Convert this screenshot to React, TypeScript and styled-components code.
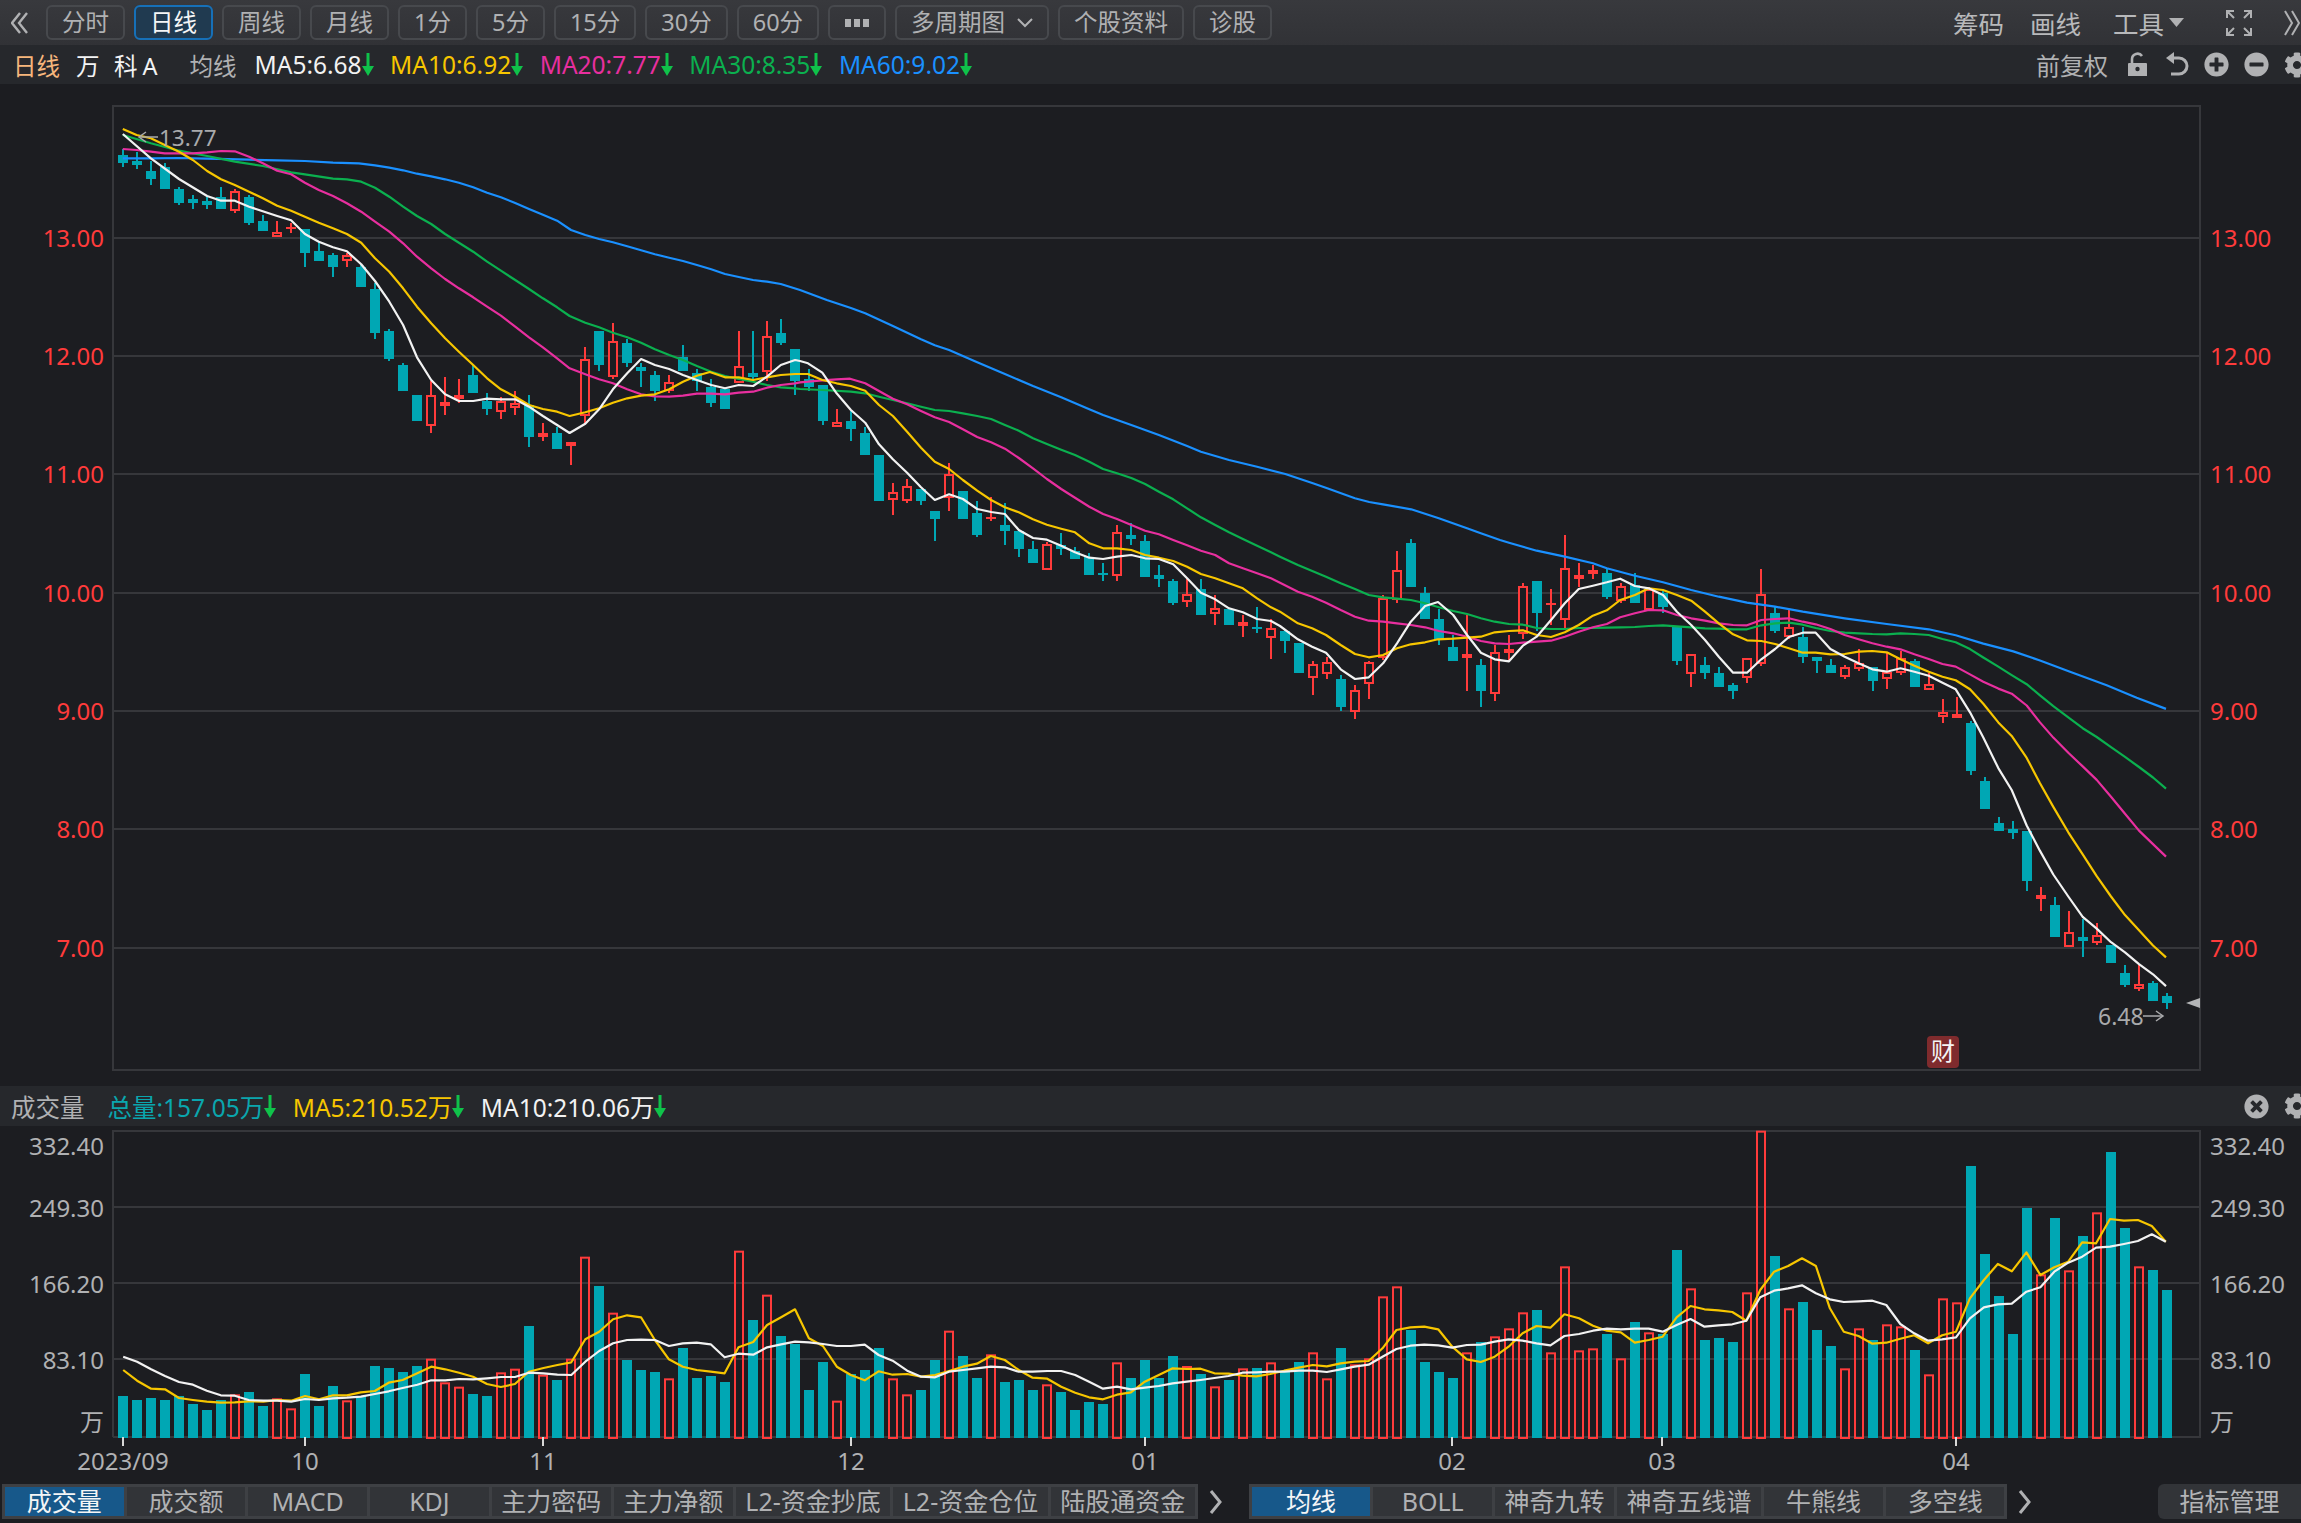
import { FaCog, FaMinusCircle, FaPlusCircle, FaTimesCircle } from 'react-icons/fa';
import styled, { createGlobalStyle } from 'styled-components';

const FONT = '"Noto Sans", "Noto Sans CJK SC", sans-serif';
const UP = '#ff3b3b';
const DOWN = '#00a7b4';
const BG = '#1c1d21';
const GRID = '#36373b';
const MA_COLORS = { ma5: '#f2f2f2', ma10: '#f7c600', ma20: '#e82f9f', ma30: '#0bb04f', ma60: '#1a90ff' };

const GlobalStyle = createGlobalStyle`
  html, body {
    margin: 0;
    background: ${BG};
    overflow: hidden;
  }
  body {
    font-family: ${FONT};
  }
`;

const Page = styled.div`
  display: flex;
  flex-direction: column;
  width: 2301px;
  height: 1523px;
  overflow: hidden;
  background: ${BG};
  font-size: 23.5px;
  color: #b4b5b7;
`;

const TopBar = styled.div`
  display: flex;
  align-items: center;
  flex: none;
  height: 45px;
  padding-left: 11px;
  background: linear-gradient(#38393d, #313236);
`;

const BackIcon = styled.svg`
  flex: none;
  width: 18px;
  height: 22px;
  margin-right: 17px;
`;

const PeriodButton = styled.div<{ $active?: boolean }>`
  display: flex;
  align-items: center;
  justify-content: center;
  gap: 12px;
  flex: none;
  box-sizing: border-box;
  height: 35px;
  margin-right: 9px;
  padding: 0 14px;
  border: 2px solid ${(p) => (p.$active ? '#1670b8' : '#47494d')};
  border-radius: 6px;
  background: ${(p) => (p.$active ? '#203a50' : 'transparent')};
  color: ${(p) => (p.$active ? '#f4f5f6' : '#b0b1b3')};
  line-height: 1;
`;

const ToolGroup = styled.div`
  display: flex;
  align-items: center;
  margin-left: auto;
  margin-right: 1px;
`;

const ToolItem = styled.span<{ $gap: number }>`
  display: flex;
  align-items: center;
  gap: 5px;
  margin-right: ${(p) => p.$gap}px;
  font-size: 25.5px;
  color: #b8b9bb;
`;

const InfoBar = styled.div`
  display: flex;
  align-items: center;
  flex: none;
  height: 39px;
  padding-left: 13px;
  background: #26282c;
  white-space: nowrap;
`;

const VolumeBar = styled(InfoBar)`
  height: 40px;
  padding-left: 11px;
  font-size: 24.5px;
`;

const Label = styled.span<{ $color?: string; $gap?: number; $track?: number }>`
  margin-right: ${(p) => p.$gap ?? 0}px;
  color: ${(p) => p.$color ?? '#b0b1b3'};
  letter-spacing: ${(p) => p.$track ?? 0}px;
`;

const Reading = styled.span<{ $color: string }>`
  display: flex;
  align-items: center;
  margin-right: 16.5px;
  font-size: 24.5px;
  color: ${(p) => p.$color};
`;

const DownArrow = styled.svg`
  flex: none;
  width: 12px;
  height: 23px;
`;

const InfoTools = styled.div`
  display: flex;
  align-items: center;
  gap: 15px;
  margin-left: auto;
  margin-right: -9px;
  color: #b0b1b3;
`;

const AdjustLabel = styled.span`
  margin-right: 3px;
  font-size: 24px;
`;

const ToolIcon = styled.svg`
  flex: none;
  width: 24px;
  height: 25px;
`;

const ChartSvg = styled.svg`
  display: block;
  flex: none;
  width: 2301px;
  font-family: ${FONT};
  font-size: 24px;
`;

const TabRow = styled.div`
  display: flex;
  align-items: center;
  flex: none;
  height: 35px;
  padding-left: 2px;
  font-size: 25px;
`;

const TabGroup = styled.div`
  display: flex;
  height: 35px;
  box-sizing: border-box;
  border: 3px solid #3e4044;
  background: #3e4044;
`;

const Tab = styled.div<{ $active?: boolean }>`
  display: flex;
  align-items: center;
  justify-content: center;
  box-sizing: border-box;
  min-width: 118.7px;
  margin-right: 3px;
  padding: 0 9.5px;
  background: ${(p) => (p.$active ? '#17588a' : '#323438')};
  color: ${(p) => (p.$active ? '#f4f5f6' : '#b0b1b3')};
  line-height: 1;
  white-space: nowrap;
  &:last-child {
    margin-right: 0;
  }
`;

const TabArrow = styled.svg<{ $after: number }>`
  flex: none;
  width: 14px;
  height: 26px;
  margin: 0 ${(p) => p.$after}px 0 11px;
`;

const ManageButton = styled.div`
  display: flex;
  align-items: center;
  justify-content: center;
  width: 143px;
  height: 35px;
  margin-left: auto;
  border-radius: 6px 0 0 6px;
  background: #323438;
  line-height: 1;
`;

type Pt = [number, number];

// pixel readings taken from crops, each with its own origin and scale
const trace = (x0: number, y0: number, sx: number, sy: number, flat: number[]): Pt[] => {
  const out: Pt[] = [];
  for (let i = 0; i < flat.length; i += 2) out.push([x0 + flat[i] / sx, y0 + flat[i + 1] / sy]);
  return out;
};
const a = (p: number[]) => trace(100, 110, 2.24, 3, p);
const b = (p: number[]) => trace(800, 300, 2.24, 3, p);
const c = (p: number[]) => trace(1280, 500, 2.24, 3, p);
const d = (p: number[]) => trace(1750, 550, 3, 2.958, p);
const v1 = (p: number[]) => trace(0, 1060, 1.3635, 3, p);
const v2 = (p: number[]) => trace(1150, 1060, 1.3635, 3, p);

const priceLines: { color: string; pts: Pt[] }[] = [
  {
    color: MA_COLORS.ma60,
    pts: [
      ...a([51,145,114,145,177,144,240,146,334,149,397,151,459,153,522,158,580,160,616,166,648,173,679,181,710,191,742,199,773,208,804,218,836,232,867,248,898,262,930,279,961,297,992,314,1024,332,1055,360,1087,375,1118,387,1149,397,1181,409,1212,421,1243,433,1275,443,1306,453,1337,465,1369,478,1400,492,1431,501,1463,510,1494,515,1525,522,1568,540]),
      ...b([60,0,114,24,146,40,208,78,271,118,302,136,334,150,397,187,459,222,522,258,585,292,648,328,679,345,742,375,804,405,867,438,898,455,961,480,1024,500,1087,522,1149,550,1181,565,1243,595,1275,606,1306,613,1369,628,1431,655,1494,685,1525,700,1568,720]),
      ...c([513,128,575,152,638,170,701,190,732,205,795,227,858,247,921,270,983,290,1046,308,1109,320,1171,335,1265,355,1359,372,1453,388]),
      ...d([617,252,700,277,790,300,870,327,960,360,1070,400,1160,437,1248,470]),
    ],
  },
  {
    color: MA_COLORS.ma30,
    pts: [
      ...a([51,75,114,100,177,122,240,138,302,155,365,168,428,187,459,193,522,206,553,208,585,215,616,233,648,260,679,290,710,318,742,342,773,372,804,398,836,425,867,455,898,482,930,510,961,537,992,565,1024,592,1052,618,1087,638,1118,652,1149,668,1181,682,1212,698,1243,718,1275,735,1306,750,1337,768,1369,785,1400,798,1431,807,1463,815,1494,825,1525,832,1557,835]),
      ...b([0,267,50,270,114,275,146,280,177,290,208,300,240,310,271,320,302,330,334,333,365,340,397,348,428,357,459,375,490,392,522,415,553,432,585,449,616,465,648,485,679,507,710,520,742,534,773,552,804,575,836,598,867,625,898,652,930,675,961,697,992,717,1024,737,1055,757]),
      ...c([0,170,40,195,103,230,136,250,168,267,199,285,231,292,262,296,293,300,325,310,356,322,388,333,419,342,450,355,481,365,513,372,544,374,575,384,607,387,638,387,669,384,701,384,732,383,762,382,795,381,826,378,858,376,889,379,921,382,952,385,983,386,1015,388,1046,388,1078,376,1109,370,1140,368,1171,374,1200,384,1233,393,1265,398,1296,400,1327,402,1359,403,1390,400,1421,402,1453,405,1484,417]),
      ...d([617,273,660,293,700,318,745,345,785,370,830,397,870,430,910,462,955,495,998,527,1040,553,1083,583,1125,612,1167,642,1209,673,1248,706]),
    ],
  },
  {
    color: MA_COLORS.ma20,
    pts: [
      ...a([51,117,82,120,114,125,145,130,177,130,208,130,240,127,271,123,302,124,334,140,365,160,397,182,428,193,459,218,490,240,522,258,553,280,585,305,616,335,648,365,679,400,710,440,742,475,773,507,804,535,836,562,867,590,898,617,930,650,961,682,992,712,1024,745,1052,775,1087,793,1118,808,1149,820,1181,838,1212,853,1243,859,1275,860,1306,857,1337,851,1369,851,1400,853,1431,848,1463,845,1494,833,1525,825,1557,820]),
      ...b([0,247,18,245,50,241,82,238,112,236,146,250,177,273,208,296,240,313,271,333,302,352,334,366,365,388,397,411,428,427,459,446,490,474,522,505,553,537,585,567,616,593,648,620,679,642,710,657,742,675,773,692,804,703,836,720,867,736,898,752,930,765,961,790,992,805,1024,820,1055,835]),
      ...c([0,248,40,275,72,290,103,308,136,330,168,350,199,362,231,365,262,370,293,375,325,382,356,393,388,400,419,410,450,423,481,430,513,432,544,428,575,425,607,422,638,410,669,395,701,382,732,372,762,352,795,340,826,330,858,331,889,345,921,355,952,362,983,370,1015,375,1046,376,1078,360,1109,357,1140,355,1171,365,1200,373,1233,387,1265,405,1296,418,1327,430,1359,440,1390,448,1421,463,1453,477,1484,492]),
      ...d([617,345,660,368,700,390,745,410,785,425,830,460,870,510,910,555,955,600,998,640,1040,680,1083,730,1125,780,1167,830,1209,870,1248,907]),
    ],
  },
  {
    color: MA_COLORS.ma10,
    pts: [
      ...a([51,57,82,75,114,85,145,105,177,125,208,150,240,183,271,208,302,225,334,245,365,265,397,287,428,302,459,320,490,338,522,355,553,372,585,398,616,445,648,485,679,535,710,590,742,640,773,685,804,725,836,765,867,805,898,838,930,860,961,885,992,897,1024,905,1052,918,1087,907,1118,895,1149,878,1181,865,1212,857,1243,853,1275,838,1306,815,1337,797,1366,786,1400,802,1431,802,1463,810,1494,802,1525,795,1557,792]),
      ...b([0,222,18,222,50,240,82,250,114,258,146,272,177,315,208,348,240,395,271,443,302,485,334,507,365,540,397,572,428,600,459,622,490,637,522,658,553,674,585,686,616,697,648,730,679,745,710,745,742,750,773,765,804,773,836,783,867,800,898,822,930,835,961,850,992,865,1024,895,1055,922]),
      ...c([0,335,40,370,72,385,103,405,136,435,168,462,199,472,231,465,262,445,293,433,325,427,354,418,388,416,419,413,450,410,481,397,513,393,544,391,575,405,607,411,638,397,669,375,701,347,732,331,762,300,795,285,826,265,858,270,889,285,921,302,952,335,983,370,1015,403,1046,421,1078,423,1109,432,1140,445,1171,458,1200,458,1233,463,1265,462,1296,455,1327,453,1359,457,1390,478,1421,497,1453,515,1484,530]),
      ...d([617,385,660,412,700,455,745,510,785,550,830,615,870,690,910,760,955,835,998,900,1040,965,1083,1025,1125,1080,1167,1125,1209,1170,1248,1205]),
    ],
  },
  {
    color: MA_COLORS.ma5,
    pts: [
      ...a([51,72,114,145,177,207,240,258,271,272,302,272,334,290,397,318,428,331,459,372,490,395,522,412,553,424,585,463,616,513,648,575,679,645,710,742,742,810,773,853,804,873,836,873,867,866,898,868,930,868,961,890,992,918,1024,945,1052,969,1087,941,1118,898,1149,838,1181,790,1212,747,1243,765,1275,777,1306,795,1337,810,1369,825,1400,835,1431,825,1463,828,1494,800,1525,765,1557,750]),
      ...b([0,183,18,190,50,218,82,280,114,330,146,368,177,433,208,478,240,518,271,562,302,600,334,583,365,597,397,627,428,636,459,642,490,690,522,714,553,719,585,737,616,757,648,773,679,777,710,770,742,765,773,775,804,777,836,793,867,835,898,878,930,898,961,925,992,937,1024,957,1055,963]),
      ...c([0,378,40,418,72,440,103,458,136,508,168,537,199,532,231,490,262,430,293,365,325,318,354,306,388,345,419,405,450,458,481,478,513,484,544,437,575,410,607,360,638,310,669,267,701,257,732,247,762,236,795,258,826,265,858,285,889,335,921,375,952,420,983,470,1015,518,1046,518,1078,478,1109,447,1140,411,1171,398,1200,398,1233,447,1265,470,1296,490,1327,508,1359,515,1390,505,1421,515,1453,527,1484,548]),
      ...d([617,412,660,480,700,555,745,645,785,710,830,815,870,890,910,960,955,1025,998,1085,1040,1120,1083,1160,1125,1190,1167,1225,1209,1255,1248,1290]),
    ],
  },
];

const volumeLines: { color: string; pts: Pt[] }[] = [
  {
    color: MA_COLORS.ma10,
    pts: [
      ...v1([168,930,187,962,206,986,225,988,244,1014,263,1020,282,1025,301,1028,320,1027,339,1024,359,1025,378,1020,397,1022,416,1008,435,1018,454,1006,473,1006,492,997,511,993,530,968,549,960,569,940,588,920,607,928,626,938,645,950,664,972,683,981,702,972,721,935,741,924,760,915,779,907,798,838,817,815,836,778,855,766,874,772,893,840,912,898,931,920,950,930,969,935,988,940,1007,862,1027,846,1046,795,1065,772,1084,748,1103,835,1122,858,1141,920,1160,945,1179,961,1198,934,1217,944,1237,942,1256,950,1275,945,1294,933,1313,920,1332,911,1351,888,1370,900,1389,930,1408,953,1428,956,1447,980,1466,998,1485,1012,1504,1018,1523,1004,1542,997,1561,965]),
      ...v2([12,945,31,925,50,927,69,926,88,940,107,941,126,947,145,949,164,942,183,932,203,923,222,915,241,919,260,910,279,905,298,903,317,865,336,810,355,802,374,800,393,808,412,860,432,898,451,906,470,890,489,860,508,820,527,798,546,803,565,763,585,775,604,797,623,812,642,817,661,848,680,840,699,830,718,772,737,738,756,748,775,751,794,756,813,782,832,690,851,635,870,618,889,595,908,618,927,745,946,815,966,828,985,851,1004,848,1023,836,1042,826,1061,850,1080,826,1099,815,1118,715,1137,660,1156,612,1175,634,1195,577,1214,645,1233,622,1252,605,1271,547,1290,550,1309,477,1328,482,1347,480,1366,498,1385,545]),
    ],
  },
  {
    color: MA_COLORS.ma5,
    pts: [
      ...v1([168,890,187,905,206,928,225,948,244,966,263,974,282,992,301,1006,320,1007,339,1020,359,1022,378,1022,397,1025,416,1017,435,1020,454,1015,473,1013,492,1010,511,1002,530,994,549,984,569,974,588,961,607,961,626,957,645,958,664,955,683,951,702,951,721,938,741,940,760,944,779,945,798,905,817,873,836,850,855,840,874,839,893,840,912,858,931,850,950,848,969,853,988,892,1007,881,1027,884,1046,862,1065,853,1084,845,1103,847,1122,852,1141,858,1160,858,1179,854,1198,885,1217,902,1237,932,1256,950,1275,952,1294,935,1313,930,1332,925,1351,920,1370,922,1389,935,1408,935,1428,933,1447,933,1466,945,1485,965,1504,986,1523,980,1542,988,1561,983]),
      ...v2([12,978,31,970,50,965,69,960,88,954,107,948,126,938,145,937,164,935,183,935,203,932,222,932,241,936,260,928,279,920,298,914,317,890,336,867,355,857,374,854,393,856,412,863,432,855,451,854,470,845,489,838,508,842,527,850,546,856,565,828,585,822,604,812,623,806,642,808,661,806,680,806,699,815,718,795,737,777,756,800,775,796,794,793,813,782,832,712,851,692,870,685,889,676,908,700,927,718,946,726,966,724,985,722,1004,735,1023,792,1042,820,1061,842,1080,838,1099,832,1118,775,1137,742,1156,733,1175,731,1195,695,1214,682,1233,635,1252,608,1271,590,1290,563,1309,560,1328,552,1347,543,1366,523,1385,545]),
    ],
  },
];

// [up, body top, body bottom, wick top, wick bottom], in page pixels
const candles: [number, number, number, number, number][] = [
  [0,155,163,149,167],[0,161,165,152,169],[0,171,179,161,185],[0,167,189,163,189],[0,189,203,187,205],[0,199,203,195,209],[0,201,205,197,209],[0,197,209,187,209],[1,191,211,189,213],[0,197,223,195,225],
  [0,221,231,215,231],[1,232,237,221,237],[1,227,229,223,233],[0,229,253,229,267],[0,251,261,241,261],[0,255,267,253,277],[1,255,261,253,267],[0,267,287,265,287],[0,289,333,283,339],[0,331,359,329,361],
  [0,365,391,363,391],[0,395,421,395,421],[1,395,426,381,433],[1,402,406,377,415],[1,395,399,379,403],[0,375,393,365,393],[0,401,409,393,415],[1,401,412,397,419],[1,403,408,391,415],[0,405,437,395,447],
  [1,433,437,423,441],[0,433,449,427,449],[1,442,446,442,465],[1,359,416,347,423],[0,331,365,331,371],[1,341,377,323,379],[0,343,363,339,367],[0,367,371,363,387],[0,375,391,371,401],[1,382,391,375,393],
  [0,357,371,345,371],[0,373,381,369,391],[0,387,403,379,407],[0,389,409,389,409],[1,366,383,331,383],[0,373,377,331,381],[1,336,372,321,381],[0,333,343,319,345],[0,349,381,349,395],[0,379,387,369,391],
  [0,385,421,385,425],[1,422,427,409,427],[0,421,429,411,441],[0,433,455,427,455],[0,455,501,455,501],[1,492,500,483,515],[1,486,501,479,503],[0,489,501,489,505],[0,511,519,511,541],[1,474,498,463,511],
  [0,491,519,491,519],[0,513,535,501,537],[1,517,519,497,521],[0,525,531,503,545],[0,531,549,531,557],[0,549,563,541,563],[1,544,570,542,570],[0,545,549,533,555],[0,551,559,547,559],[0,557,575,553,575],
  [0,573,575,563,581],[1,532,576,525,581],[0,535,539,523,545],[0,541,577,535,577],[0,575,579,565,587],[0,581,603,579,605],[1,594,602,579,607],[0,589,615,579,615],[1,608,614,595,625],[0,609,625,609,625],
  [1,622,626,615,637],[0,627,629,607,633],[1,628,638,619,659],[0,631,641,629,653],[0,643,673,643,673],[1,664,678,661,695],[1,662,674,657,679],[0,679,707,675,711],[1,690,712,685,719],[1,662,684,661,699],
  [1,598,658,595,660],[1,570,600,551,603],[0,543,587,539,587],[0,593,619,587,619],[0,619,639,609,645],[0,647,661,635,661],[1,654,658,615,691],[0,665,691,659,707],[1,652,694,645,701],[1,649,653,635,661],
  [1,586,634,583,639],[0,581,613,581,631],[1,603,605,589,625],[1,568,620,535,629],[1,575,579,563,587],[1,570,574,565,579],[0,573,597,569,599],[1,586,601,583,603],[0,585,603,573,603],[1,589,610,587,610],
  [0,593,607,591,613],[0,627,661,627,665],[1,654,674,654,687],[0,665,673,657,679],[0,673,687,667,687],[0,685,691,683,699],[1,658,678,658,683],[1,594,664,569,666],[0,613,631,607,633],[1,627,637,610,639],
  [0,637,657,627,663],[0,657,661,657,673],[0,665,673,659,673],[1,667,677,665,679],[1,663,669,649,671],[0,667,681,667,691],[1,672,679,653,689],[1,658,673,651,675],[0,661,687,659,687],[1,684,690,673,690],
  [1,712,717,699,723],[1,714,718,697,718],[0,723,771,721,775],[0,781,809,777,809],[0,823,831,817,831],[0,829,833,821,839],[0,831,881,831,891],[1,895,899,887,911],[0,905,937,897,937],[1,932,947,911,947],
  [0,937,941,919,957],[1,935,943,923,945],[0,945,963,945,963],[0,973,985,965,987],[1,984,989,965,991],[0,983,1001,981,1001],[0,996,1003,993,1009],
];

// bar tops read off the 3x crop: add 1060 after dividing by 3
const volumeTops = [
  1008,1020,1014,1020,1008,1032,1050,1020,1003,996,1038,1015,1045,942,1038,978,1021,1008,918,924,
  936,918,896,967,980,1002,1008,937,926,798,944,960,896,590,678,758,900,930,936,955,
  864,954,948,966,572,780,704,828,852,990,906,1022,942,930,864,955,1003,990,900,812,
  888,954,883,966,960,990,973,996,1050,1026,1032,907,954,900,954,888,918,942,979,960,
  925,924,907,936,906,877,955,864,913,895,709,679,810,906,936,954,877,846,829,805,
  757,750,877,619,871,865,822,895,786,817,822,570,685,840,834,846,697,212,588,745,
  726,810,858,925,805,840,793,799,870,943,715,727,318,582,708,822,444,643,474,631,
  528,457,276,504,619,630,690,
];

const candleX = (i: number) => 123 + i * 14;
const toPoints = (pts: Pt[]) => pts.map(([x, y]) => `${x.toFixed(1)},${y.toFixed(1)}`).join(' ');

const priceGrid = [
  { label: '13.00', y: 238 },
  { label: '12.00', y: 356 },
  { label: '11.00', y: 474 },
  { label: '10.00', y: 593 },
  { label: '9.00', y: 711 },
  { label: '8.00', y: 829 },
  { label: '7.00', y: 948 },
];
const volumeGrid = [
  { label: '332.40', y: 1146, line: 0 },
  { label: '249.30', y: 1208, line: 1207 },
  { label: '166.20', y: 1284, line: 1283 },
  { label: '83.10', y: 1360, line: 1359 },
  { label: '万', y: 1422, line: 0 },
];
const months = [
  { label: '2023/09', x: 123 },
  { label: '10', x: 305 },
  { label: '11', x: 543 },
  { label: '12', x: 851 },
  { label: '01', x: 1145 },
  { label: '02', x: 1452 },
  { label: '03', x: 1662 },
  { label: '04', x: 1956 },
];

const PriceChart = () => (
  <ChartSvg viewBox="0 84 2301 1002" height={1002}>
    <rect x={113} y={106} width={2087} height={964} fill="none" stroke={GRID} strokeWidth={2} />
    {priceGrid.map((g) => (
      <g key={g.label}>
        <line x1={113} x2={2200} y1={g.y} y2={g.y} stroke={GRID} strokeWidth={2} />
        <text x={104} y={g.y + 9} textAnchor="end" fill={UP}>{g.label}</text>
        <text x={2210} y={g.y + 9} fill={UP}>{g.label}</text>
      </g>
    ))}
    {candles.map(([up, top, bottom, wickTop, wickBottom], i) => {
      const x = candleX(i);
      const color = up ? UP : DOWN;
      return (
        <g key={i}>
          <line x1={x} x2={x} y1={wickTop} y2={wickBottom} stroke={color} strokeWidth={2} />
          {up && bottom - top > 4 ? (
            <rect x={x - 4} y={top + 1} width={8} height={bottom - top - 2} fill={BG} stroke={color} strokeWidth={2} />
          ) : (
            <rect x={x - 5} y={top} width={10} height={bottom - top} fill={color} />
          )}
        </g>
      );
    })}
    {priceLines.map((l) => (
      <polyline key={l.color} points={toPoints(l.pts)} fill="none" stroke={l.color} strokeWidth={2.2} strokeLinejoin="round" />
    ))}
    <line x1={139} x2={158} y1={137} y2={137} stroke="#a9aaac" strokeWidth={1.5} />
    <path d="M146 132l-7 5 7 5" fill="none" stroke="#a9aaac" strokeWidth={1.5} />
    <text x={159} y={146} fill="#a9aaac" fontSize={22.5}>13.77</text>
    <text x={2098} y={1025} fill="#a9aaac" fontSize={23}>6.48</text>
    <line x1={2143} x2={2163} y1={1016} y2={1016} stroke="#a9aaac" strokeWidth={1.5} />
    <path d="M2156 1011l7 5-7 5" fill="none" stroke="#a9aaac" strokeWidth={1.5} />
    <polygon points="2186,1003 2200,998 2200,1008" fill="#b4b5b7" />
    <rect x={1927} y={1036} width={32} height={32} rx={4} fill="#7f2b2d" />
    <text x={1943} y={1060} textAnchor="middle" fill="#f4f4f4">财</text>
  </ChartSvg>
);

const VolumeChart = () => (
  <ChartSvg viewBox="0 1126 2301 358" height={358}>
    <path d="M113 1437V1131H2200V1437H113" fill="none" stroke={GRID} strokeWidth={2} />
    {volumeGrid.map((g) => (
      <g key={g.label}>
        {g.line > 0 && <line x1={113} x2={2200} y1={g.line} y2={g.line} stroke={GRID} strokeWidth={2} />}
        <text x={104} y={g.y + 9} textAnchor="end" fill="#b0b1b3">{g.label}</text>
        <text x={2210} y={g.y + 9} fill="#b0b1b3">{g.label}</text>
      </g>
    ))}
    {volumeTops.map((raw, i) => {
      const x = candleX(i);
      const top = 1060 + raw / 3;
      return candles[i][0] ? (
        <rect key={i} x={x - 4} y={top + 1} width={8} height={1437 - top} fill="none" stroke={UP} strokeWidth={2} />
      ) : (
        <rect key={i} x={x - 5} y={top} width={10} height={1438 - top} fill={DOWN} />
      );
    })}
    {volumeLines.map((l) => (
      <polyline key={l.color} points={toPoints(l.pts)} fill="none" stroke={l.color} strokeWidth={2.2} strokeLinejoin="round" />
    ))}
    {months.map((m) => (
      <g key={m.label}>
        <line x1={m.x} x2={m.x} y1={1437} y2={1446} stroke="#d8d8d8" strokeWidth={2} />
        <text x={m.x} y={1470} textAnchor="middle" fill="#b0b1b3">{m.label}</text>
      </g>
    ))}
  </ChartSvg>
);

const Arrow = () => (
  <DownArrow viewBox="0 0 12 23">
    <path d="M4.5 0h3v13H12L6 23 0 13h4.5z" fill="#0fc24a" />
  </DownArrow>
);

const periods = ['分时', '日线', '周线', '月线', '1分', '5分', '15分', '30分', '60分'];
const tabsA = ['成交量', '成交额', 'MACD', 'KDJ', '主力密码', '主力净额', 'L2-资金抄底', 'L2-资金仓位', '陆股通资金'];
const tabsB = ['均线', 'BOLL', '神奇九转', '神奇五线谱', '牛熊线', '多空线'];
const readings = [
  { text: 'MA5:6.68', color: MA_COLORS.ma5 },
  { text: 'MA10:6.92', color: MA_COLORS.ma10 },
  { text: 'MA20:7.77', color: MA_COLORS.ma20 },
  { text: 'MA30:8.35', color: MA_COLORS.ma30 },
  { text: 'MA60:9.02', color: MA_COLORS.ma60 },
];

export default function App() {
  return (
    <Page>
      <GlobalStyle />
      <TopBar>
        <BackIcon viewBox="0 0 18 22">
          <path d="M9 1 1 11l8 10M16 1 8 11l8 10" fill="none" stroke="#b0b1b3" strokeWidth={2.4} />
        </BackIcon>
        {periods.map((p) => (
          <PeriodButton key={p} $active={p === '日线'}>{p}</PeriodButton>
        ))}
        <PeriodButton>
          <svg width={26} height={10} viewBox="0 0 26 10">
            <path d="M1 1h6v8H1zM10 1h6v8h-6zM19 1h6v8h-6z" fill="#b0b1b3" />
          </svg>
        </PeriodButton>
        <PeriodButton>
          多周期图
          <svg width={16} height={10} viewBox="0 0 16 10">
            <path d="M1 1l7 7 7-7" fill="none" stroke="#b0b1b3" strokeWidth={2} />
          </svg>
        </PeriodButton>
        <PeriodButton>个股资料</PeriodButton>
        <PeriodButton>诊股</PeriodButton>
        <ToolGroup>
          <ToolItem $gap={26}>筹码</ToolItem>
          <ToolItem $gap={32}>画线</ToolItem>
          <ToolItem $gap={41}>
            工具
            <svg width={15} height={9} viewBox="0 0 15 9">
              <path d="M0 0h15L7.5 9z" fill="#b0b1b3" />
            </svg>
          </ToolItem>
          <ToolItem $gap={31}>
            <svg width={28} height={28} viewBox="0 0 28 28" fill="none" stroke="#b0b1b3" strokeWidth={2}>
              <path d="M2 9V2h7M2 2l7 7M26 9V2h-7M26 2l-7 7M2 19v7h7M2 26l7-7M26 19v7h-7M26 26l-7-7" />
            </svg>
          </ToolItem>
          <svg width={16} height={26} viewBox="0 0 16 26" fill="none" stroke="#b0b1b3" strokeWidth={2}>
            <path d="M1 1l7 12-7 12M8 1l7 12-7 12" />
          </svg>
        </ToolGroup>
      </TopBar>

      <InfoBar>
        <Label $color="#f6b67c" $gap={16}>日线</Label>
        <Label $color="#f2f3f4" $gap={14.5}>万</Label>
        <Label $color="#f2f3f4" $gap={27} $track={5}>科A</Label>
        <Label $gap={18}>均线</Label>
        {readings.map((r) => (
          <Reading key={r.text} $color={r.color}>
            {r.text}
            <Arrow />
          </Reading>
        ))}
        <InfoTools>
          <AdjustLabel>前复权</AdjustLabel>
          <ToolIcon viewBox="0 0 24 25">
            <path d="M3 11h17a1 1 0 0 1 1 1v12H2V12a1 1 0 0 1 1-1z" fill="#b0b1b3" />
            <path d="M6 11V7a5.5 5.5 0 0 1 10-3" fill="none" stroke="#b0b1b3" strokeWidth={2.6} />
            <circle cx={11.5} cy={17} r={2.2} fill="#26282c" />
          </ToolIcon>
          <ToolIcon viewBox="0 0 24 25">
            <path d="M4 6h10a7.5 7.5 0 0 1 0 16H6" fill="none" stroke="#b0b1b3" strokeWidth={3} />
            <path d="M9 0 1 6l8 6z" fill="#b0b1b3" />
          </ToolIcon>
          <FaPlusCircle size={25} />
          <FaMinusCircle size={25} />
          <FaCog size={26} />
        </InfoTools>
      </InfoBar>

      <PriceChart />

      <VolumeBar>
        <Label $gap={23}>成交量</Label>
        <Reading $color="#0aa6ae">
          总量:157.05万
          <Arrow />
        </Reading>
        <Reading $color={MA_COLORS.ma10}>
          MA5:210.52万
          <Arrow />
        </Reading>
        <Reading $color={MA_COLORS.ma5}>
          MA10:210.06万
          <Arrow />
        </Reading>
        <InfoTools>
          <FaTimesCircle size={25} />
          <FaCog size={26} />
        </InfoTools>
      </VolumeBar>

      <VolumeChart />

      <TabRow>
        <TabGroup>
          {tabsA.map((t) => (
            <Tab key={t} $active={t === '成交量'}>{t}</Tab>
          ))}
        </TabGroup>
        <TabArrow $after={26} viewBox="0 0 14 26">
          <path d="M2 2l9 11-9 11" fill="none" stroke="#b0b1b3" strokeWidth={3} />
        </TabArrow>
        <TabGroup>
          {tabsB.map((t) => (
            <Tab key={t} $active={t === '均线'}>{t}</Tab>
          ))}
        </TabGroup>
        <TabArrow $after={0} viewBox="0 0 14 26">
          <path d="M2 2l9 11-9 11" fill="none" stroke="#b0b1b3" strokeWidth={3} />
        </TabArrow>
        <ManageButton>指标管理</ManageButton>
      </TabRow>
    </Page>
  );
}
